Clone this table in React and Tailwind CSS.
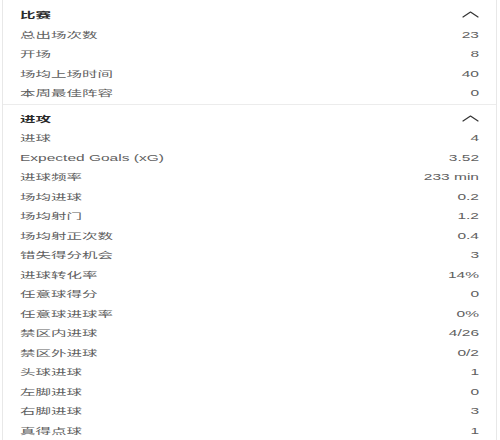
const sections = [
  {
    title: "比赛",
    rows: [
      ["总出场次数", "23"],
      ["开场", "8"],
      ["场均上场时间", "40"],
      ["本周最佳阵容", "0"],
    ],
  },
  {
    title: "进攻",
    rows: [
      ["进球", "4"],
      ["Expected Goals (xG)", "3.52"],
      ["进球频率", "233 min"],
      ["场均进球", "0.2"],
      ["场均射门", "1.2"],
      ["场均射正次数", "0.4"],
      ["错失得分机会", "3"],
      ["进球转化率", "14%"],
      ["任意球得分", "0"],
      ["任意球进球率", "0%"],
      ["禁区内进球", "4/26"],
      ["禁区外进球", "0/2"],
      ["头球进球", "1"],
      ["左脚进球", "0"],
      ["右脚进球", "3"],
      ["真得点球", "1"],
    ],
  },
];

function ChevronUp() {
  return (
    <svg width="17" height="7" viewBox="0 0 17 7" fill="none">
      <path d="M1 6 L8.5 1 L16 6" stroke="#333" strokeWidth="1.2" strokeLinecap="round" strokeLinejoin="round" />
    </svg>
  );
}

function Section({ title, rows, last }) {
  return (
    <div className={`pt-[4px] pb-[1px] px-[17px] ${last ? "" : "border-b border-[#ececec]"}`}>
      <div className="h-[19.5px] flex items-center justify-between">
        <span className="scale-y-[0.55] font-bold text-[#2a2a2a]">{title}</span>
        <ChevronUp />
      </div>
      {rows.map(([label, value]) => (
        <div key={label} className="h-[19.5px] flex items-center justify-between scale-y-[0.55] text-[#606060]">
          <span>{label}</span>
          <span>{value}</span>
        </div>
      ))}
    </div>
  );
}

export default function App() {
  return (
    <div className="w-[500px] h-[440px] overflow-hidden bg-white pl-[2px] pr-[3px]">
      <div
        className="h-full border-x border-[#e8e8e8] pt-[1px] text-[15.5px] leading-none"
        style={{ fontFamily: '"Liberation Sans", "Noto Sans CJK SC", sans-serif' }}
      >
        {sections.map((s, i) => (
          <Section key={s.title} {...s} last={i === sections.length - 1} />
        ))}
      </div>
    </div>
  );
}
